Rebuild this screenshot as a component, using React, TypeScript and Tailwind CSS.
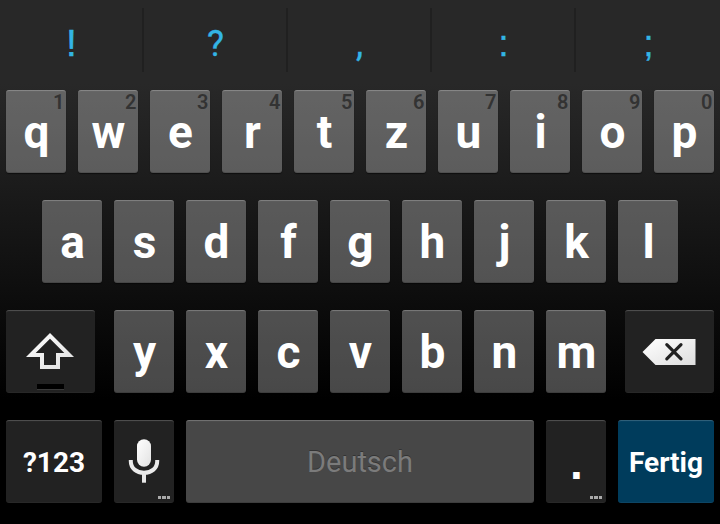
import type { ReactNode } from 'react';

const suggestions = [
  { char: '!', style: 'font-["Liberation_Sans",sans-serif] text-[37px] [-webkit-text-stroke:0.6px_#33b5e5]' },
  { char: '?', style: 'text-[36px] [-webkit-text-stroke:0.3px_#33b5e5]' },
  { char: ',', style: 'text-[36px] [-webkit-text-stroke:0.3px_#33b5e5]' },
  { char: ':', style: 'font-["Liberation_Sans",sans-serif] text-[36px] [-webkit-text-stroke:0.4px_#33b5e5]' },
  { char: ';', style: 'font-["Liberation_Sans",sans-serif] text-[36px] [-webkit-text-stroke:0.4px_#33b5e5]' },
];
const topRow = ['q', 'w', 'e', 'r', 't', 'z', 'u', 'i', 'o', 'p'];
const hints = ['1', '2', '3', '4', '5', '6', '7', '8', '9', '0'];
const homeRow = ['a', 's', 'd', 'f', 'g', 'h', 'j', 'k', 'l'];
const bottomRow = ['y', 'x', 'c', 'v', 'b', 'n', 'm'];

const tones = {
  light:
    'bg-white/28 shadow-[inset_0_2px_1px_-1px_rgba(255,255,255,0.25),inset_0_-1px_0_rgba(0,0,0,0.14),0_1px_1px_rgba(0,0,0,0.5)]',
  dark: 'bg-[#222222] shadow-[inset_0_2px_1px_-1px_rgba(255,255,255,0.22),inset_0_-1px_0_rgba(255,255,255,0.03)]',
  blue: 'bg-[#003c5c] shadow-[inset_0_2px_1px_-1px_rgba(255,255,255,0.2),inset_0_-1px_0_rgba(255,255,255,0.05)]',
};

function Key({
  width = 'w-[60px]',
  tone = 'light',
  children,
}: {
  width?: string;
  tone?: keyof typeof tones;
  children?: ReactNode;
}) {
  return (
    <div
      className={`relative flex h-[83px] shrink-0 items-center justify-center rounded-[3px] ${width} ${tones[tone]}`}
    >
      {children}
    </div>
  );
}

function Letter({ char, hint }: { char: string; hint?: string }) {
  return (
    <Key>
      <span className="pt-px pl-px text-[46px] leading-[54px] font-bold text-white">{char}</span>
      {hint && (
        <span className="absolute top-0 right-[1.5px] text-[20px] leading-6 font-semibold text-[#333333]">{hint}</span>
      )}
    </Key>
  );
}

function MoreDots() {
  return (
    <span className="absolute right-[4px] bottom-[4px] flex gap-px">
      <i className="h-[3px] w-[3.33px] bg-[#aaaaaa]" />
      <i className="h-[3px] w-[3.33px] bg-[#aaaaaa]" />
      <i className="h-[3px] w-[3.33px] bg-[#aaaaaa]" />
    </span>
  );
}

function ShiftIcon() {
  return (
    <svg width="89" height="83" viewBox="0 0 89 83">
      <defs>
        <linearGradient id="shift" x1="0" y1="0" x2="1" y2="1">
          <stop offset="0" stopColor="#ffffff" />
          <stop offset="1" stopColor="#dedede" />
        </linearGradient>
      </defs>
      <path
        fill="url(#shift)"
        fillRule="evenodd"
        d="M44 23 68 47H54V59H34V47H20ZM44 28.7 29.7 43H38V55H50V43H58.3Z"
      />
      <path fill="#000" d="M31 74h27v5H31z" />
      <path fill="#3b3b3b" d="M31 79h27v1H31z" />
    </svg>
  );
}

function DeleteIcon() {
  return (
    <svg width="89" height="83" viewBox="0 0 89 83">
      <defs>
        <linearGradient id="del" x1="0" y1="0" x2="1" y2="1">
          <stop offset="0" stopColor="#ffffff" />
          <stop offset="1" stopColor="#dedede" />
        </linearGradient>
      </defs>
      <path fill="url(#del)" d="M17.5 42 30.5 29H70.5V55H30.5Z" />
      <path d="M41.8 34.7 56 48.9M56 34.7 41.8 48.9" stroke="#222" strokeWidth="3.2" strokeLinecap="round" />
    </svg>
  );
}

function MicIcon() {
  return (
    <svg width="60" height="83" viewBox="0 0 60 83">
      <defs>
        <linearGradient id="mic" x1="0" y1="0" x2="1" y2="1">
          <stop offset="0" stopColor="#ffffff" />
          <stop offset="1" stopColor="#e2e2e2" />
        </linearGradient>
      </defs>
      <rect x="23" y="19.3" width="14" height="27.5" rx="7" fill="url(#mic)" />
      <path
        d="M16.8 40V41.2C16.8 48.2 22.4 52.8 30 52.8S43.2 48.2 43.2 41.2V40"
        fill="none"
        stroke="#ebebeb"
        strokeWidth="4"
      />
      <path fill="#e8e8e8" d="M28 53h4v9.7h-4z" />
    </svg>
  );
}

export default function App() {
  return (
    <div className="flex h-[524px] w-[720px] flex-col overflow-hidden bg-[linear-gradient(#282828_0px,#282828_84px,#000000_400px)] font-[Roboto,sans-serif]">
      <div className="flex h-[90px] shrink-0 pt-2">
        {suggestions.map(({ char, style }, i) => (
          <div
            key={char}
            className={`flex h-16 w-36 shrink-0 justify-center border-[#202020] text-[36px] leading-[42px] text-[#33b5e5] ${
              i < 4 ? 'border-r-2' : ''
            }`}
          >
            <span className="pt-[15px] pl-px">
              <span className={`leading-none ${style}`}>{char}</span>
            </span>
          </div>
        ))}
      </div>
      <div className="flex flex-col gap-[27px]">
        <div className="flex justify-center gap-3">
          {topRow.map((c, i) => (
            <Letter key={c} char={c} hint={hints[i]} />
          ))}
        </div>
        <div className="flex justify-center gap-3">
          {homeRow.map((c) => (
            <Letter key={c} char={c} />
          ))}
        </div>
        <div className="flex justify-between px-[6px]">
          <Key width="w-[89px]" tone="dark">
            <ShiftIcon />
          </Key>
          <div className="flex gap-3">
            {bottomRow.map((c) => (
              <Letter key={c} char={c} />
            ))}
          </div>
          <Key width="w-[89px]" tone="dark">
            <DeleteIcon />
          </Key>
        </div>
        <div className="flex gap-3 px-[6px]">
          <Key width="w-24" tone="dark">
            <span className="pt-0.5 text-[28px] font-bold text-white">?123</span>
          </Key>
          <Key tone="dark">
            <MicIcon />
            <MoreDots />
          </Key>
          <Key width="w-[348px]">
            <span className="pt-0.5 text-[29px] text-[#7b7b7b] [text-shadow:0_-1px_0_#333]">Deutsch</span>
          </Key>
          <Key tone="dark">
            <span className='pt-0.5 pl-px font-["Liberation_Sans",sans-serif] text-[46px] leading-[54px] font-bold text-white'>
              .
            </span>
            <MoreDots />
          </Key>
          <Key width="w-24" tone="blue">
            <span className="pt-0.5 text-[28px] font-bold text-white">Fertig</span>
          </Key>
        </div>
      </div>
    </div>
  );
}
